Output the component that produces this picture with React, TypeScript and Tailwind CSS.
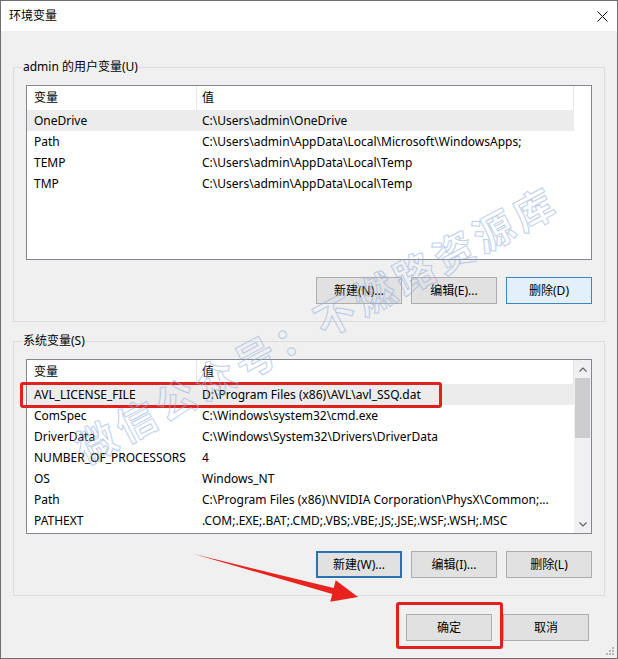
import React from 'react';

type Row = [string, string];

const userRows: Row[] = [
  ['OneDrive', 'C:\\Users\\admin\\OneDrive'],
  ['Path', 'C:\\Users\\admin\\AppData\\Local\\Microsoft\\WindowsApps;'],
  ['TEMP', 'C:\\Users\\admin\\AppData\\Local\\Temp'],
  ['TMP', 'C:\\Users\\admin\\AppData\\Local\\Temp'],
];

const sysRows: Row[] = [
  ['AVL_LICENSE_FILE', 'D:\\Program Files (x86)\\AVL\\avl_SSQ.dat'],
  ['ComSpec', 'C:\\Windows\\system32\\cmd.exe'],
  ['DriverData', 'C:\\Windows\\System32\\Drivers\\DriverData'],
  ['NUMBER_OF_PROCESSORS', '4'],
  ['OS', 'Windows_NT'],
  ['Path', 'C:\\Program Files (x86)\\NVIDIA Corporation\\PhysX\\Common;...'],
  ['PATHEXT', '.COM;.EXE;.BAT;.CMD;.VBS;.VBE;.JS;.JSE;.WSF;.WSH;.MSC'],
];

const Chevron = ({ down }: { down?: boolean }) => (
  <svg width="8" height="5" viewBox="0 0 8 5">
    <path
      d={down ? 'M0.5 0.5 L4 4 L7.5 0.5' : 'M0.5 4.5 L4 1 L7.5 4.5'}
      fill="none"
      stroke="#606060"
      strokeWidth="1.2"
    />
  </svg>
);

const Scrollbar = () => (
  <div className="w-[17px] bg-[#f0f0f0] flex flex-col items-center">
    <div className="h-[18px] w-full flex items-center justify-center">
      <Chevron />
    </div>
    <div className="w-[15px] h-[60px] bg-[#cdcdcd]" />
    <div className="flex-1" />
    <div className="h-[17px] w-full flex items-center justify-center">
      <Chevron down />
    </div>
  </div>
);

function VarList({ rows, scroll }: { rows: Row[]; scroll?: boolean }) {
  return (
    <div className="h-[175px] border border-[#828790] bg-white flex overflow-hidden">
      <div className="w-[547px]">
        <div className="flex h-[24px]">
          <div className="w-[170px] border-r border-[#e5e5e5] pl-[7px] flex items-center">变量</div>
          <div className="w-[377px] border-r border-[#e5e5e5] pl-[5px] flex items-center">值</div>
        </div>
        {rows.map(([name, value], i) => (
          <div key={name + i} className={`flex h-[21px] items-center whitespace-nowrap ${i === 0 ? 'bg-[#ececec]' : ''}`}>
            <div className="w-[170px] pl-[7px] overflow-hidden">{name}</div>
            <div className="w-[377px] pl-[5px] overflow-hidden">{value}</div>
          </div>
        ))}
      </div>
      {scroll ? <Scrollbar /> : <div className="flex-1" />}
    </div>
  );
}

function Btn({ label, kind = 'normal', className = '' }: { label: string; kind?: 'normal' | 'hot' | 'default'; className?: string }) {
  const look =
    kind === 'hot'
      ? 'border border-[#3c86c4] bg-[#e3eff9]'
      : kind === 'default'
      ? 'border-2 border-[#2a72b5] bg-[#e1e1e1]'
      : 'border border-[#adadad] bg-[#e1e1e1]';
  return (
    <div className={`w-[86px] h-[27px] flex items-center justify-center ${look} ${className}`}>{label}</div>
  );
}

function Group({ title, children, className = '' }: { title: string; children: React.ReactNode; className?: string }) {
  return (
    <fieldset className={`border border-[#dcdcdc] px-[12px] pt-[10px] pb-[17px] ${className}`}>
      <legend className="-ml-[4px] px-[1px] leading-[16px]">{title}</legend>
      {children}
    </fieldset>
  );
}

export default function App() {
  return (
    <div className="relative w-[618px] h-[659px] overflow-hidden border border-[#6f6f6f] bg-[#f0f0f0] text-[12px] leading-[16px] text-black font-['Noto_Sans','Noto_Sans_CJK_SC',sans-serif]">
      <div className="h-[30px] bg-white flex items-center justify-between pl-[8px] pr-[9px]">
        <span>环境变量</span>
        <svg width="11" height="11" viewBox="0 0 11 11">
          <path d="M0.5 0.5 L10.5 10.5 M10.5 0.5 L0.5 10.5" stroke="#111" strokeWidth="1" />
        </svg>
      </div>

      <div className="px-[12px] pt-[28px]">
        <Group title="admin 的用户变量(U)">
          <VarList rows={userRows} />
          <div className="flex justify-end gap-[9px] mt-[17px]">
            <Btn label="新建(N)..." />
            <Btn label="编辑(E)..." />
            <Btn label="删除(D)" kind="hot" />
          </div>
        </Group>

        <Group title="系统变量(S)" className="mt-[11px]">
          <VarList rows={sysRows} scroll />
          <div className="flex justify-end gap-[9px] mt-[17px]">
            <Btn label="新建(W)..." kind="default" />
            <Btn label="编辑(I)..." />
            <Btn label="删除(L)" />
          </div>
        </Group>

        <div className="flex justify-end gap-[11px] mt-[18px] pr-[16px]">
          <Btn label="确定" />
          <Btn label="取消" />
        </div>
      </div>

      {/* annotations */}
      <div className="absolute left-[19px] top-[381px] w-[422px] h-[26px] border-[3px] border-[#e0211d] rounded-[3px]" />
      <div className="absolute left-[395px] top-[601px] w-[107px] h-[47px] border-[3px] border-[#e0211d] rounded-[3px]" />
      <svg className="absolute left-0 top-0 pointer-events-none" width="618" height="659" viewBox="0 0 618 659">
        <polygon
          points="193,553 332.7,587.1 334.7,579.3 357,596 329.3,600.7 331.3,592.9"
          fill="#e8231e"
        />
        <g fill="#b5b5b5">
          <rect x="611" y="646" width="2" height="2" />
          <rect x="608" y="649" width="2" height="2" />
          <rect x="611" y="649" width="2" height="2" />
          <rect x="605" y="652" width="2" height="2" />
          <rect x="608" y="652" width="2" height="2" />
          <rect x="611" y="652" width="2" height="2" />
        </g>
      </svg>

      {/* watermark */}
      <div className="absolute left-[316px] top-[324px] -translate-x-1/2 -translate-y-1/2 -rotate-[28deg] whitespace-nowrap pointer-events-none text-[40px] leading-[40px] font-bold tracking-[5px] text-transparent opacity-60 [-webkit-text-stroke:1px_#95b0de]">
        微信公众号：不燃路资源库
      </div>
    </div>
  );
}
